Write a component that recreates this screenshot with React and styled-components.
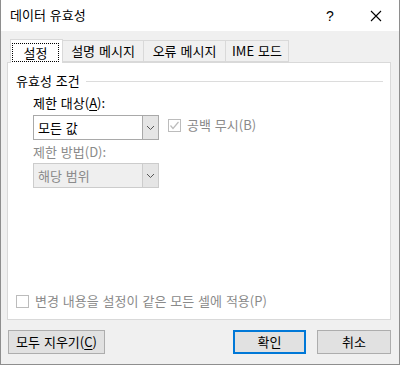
import React from "react";
import styled, { createGlobalStyle } from "styled-components";

const Global = createGlobalStyle`
  html, body { margin: 0; padding: 0; background: #ffffff; }
  * { box-sizing: border-box; }
  body { font-family: "Noto Sans CJK KR", "Noto Sans", sans-serif; font-size: 13px; color: #000; word-spacing: 1px; }
`;

const Window = styled.div`
  width: 400px;
  height: 365px;
  display: flex;
  flex-direction: column;
  border: 1px solid #8e8e8e;
  border-top: none;
  background: #f0f0f0;
  overflow: hidden;
`;

const TitleBar = styled.div`
  height: 31px;
  background: #ffffff;
  display: flex;
  align-items: center;
  padding-left: 9px;
  flex-shrink: 0;
`;

const Title = styled.div`
  flex: 1;
  line-height: 16px;
  padding-bottom: 1px;
`;

const TitleBtn = styled.div`
  width: ${(p) => p.$w}px;
  height: 31px;
  display: flex;
  align-items: center;
  justify-content: center;
  font-family: "Liberation Sans", sans-serif;
  font-size: 14px;
`;

const Body = styled.div`
  flex: 1;
  display: flex;
  flex-direction: column;
  padding: 8px 8px 0 6px;
`;

const TabStrip = styled.div`
  display: flex;
  align-items: flex-end;
  height: 23px;
  padding-left: 3px;
  position: relative;
  z-index: 1;
`;

const Tab = styled.div`
  width: ${(p) => p.$w}px;
  height: ${(p) => (p.$active ? 24 : 22)}px;
  margin-bottom: ${(p) => (p.$active ? -1 : 0)}px;
  margin-left: ${(p) => (p.$first ? 0 : -1)}px;
  background: ${(p) => (p.$active ? "#ffffff" : "#f0f0f0")};
  border: 1px solid #d9d9d9;
  border-bottom: ${(p) => (p.$active ? "none" : "1px solid #d9d9d9")};
  display: flex;
  align-items: ${(p) => (p.$active ? "flex-start" : "center")};
  justify-content: center;
  line-height: 16px;
  padding-top: ${(p) => (p.$active ? 3 : 0)}px;
  white-space: nowrap;
`;

const Focus = styled.span`
  display: flex;
  align-items: center;
  justify-content: center;
  width: 47px;
  height: 19px;
  margin-right: 2px;
  outline: 1px dotted #000;
  outline-offset: -1px;
`;

const Panel = styled.div`
  width: 384px;
  height: 258px;
  background: #ffffff;
  border: 1px solid #d9d9d9;
  display: flex;
  flex-direction: column;
  padding: 10px 7px 10px 8px;
`;

const GroupHead = styled.div`
  display: flex;
  align-items: center;
  line-height: 16px;
  gap: 6px;
  &::after {
    content: "";
    flex: 1;
    height: 1px;
    background: #dcdcdc;
    margin-top: 1px;
  }
`;

const Label = styled.div`
  line-height: 16px;
  margin-left: 17px;
  margin-top: ${(p) => p.$mt}px;
  color: ${(p) => (p.$disabled ? "#8a8a8a" : "#000")};
`;

const U = styled.span`
  text-decoration: underline;
  text-underline-offset: 2px;
`;

const Row = styled.div`
  display: flex;
  align-items: flex-start;
  margin-left: 17px;
  margin-top: ${(p) => p.$mt}px;
`;

const Combo = styled.div`
  width: 126px;
  height: 25px;
  display: flex;
  border: 1px solid ${(p) => (p.$disabled ? "#cccccc" : "#a9a9a9")};
  background: ${(p) => (p.$disabled ? "#efefef" : "#ffffff")};
  color: ${(p) => (p.$disabled ? "#8a8a8a" : "#000")};
`;

const ComboText = styled.div`
  flex: 1;
  display: flex;
  align-items: center;
  padding-left: 4px;
  line-height: 16px;
`;

const ComboBtn = styled.div`
  width: 17px;
  margin: -1px -1px -1px 0;
  border: 1px solid ${(p) => (p.$disabled ? "#cccccc" : "#a9a9a9")};
  background: #e5e5e5;
  display: flex;
  align-items: center;
  justify-content: center;
`;

const CheckRow = styled.div`
  display: flex;
  align-items: center;
  gap: 6px;
  color: #8a8a8a;
  line-height: 16px;
  margin: ${(p) => p.$m};
  white-space: nowrap;
`;

const Box = styled.div`
  width: 13px;
  height: 13px;
  border: 1px solid #bcbcbc;
  background: #ffffff;
  display: flex;
  align-items: center;
  justify-content: center;
`;

const Spacer = styled.div`
  flex: 1;
`;

const Footer = styled.div`
  display: flex;
  align-items: center;
  padding-top: 10px;
  padding-left: 1px;
`;

const Button = styled.div`
  width: ${(p) => p.$w}px;
  height: 24px;
  background: #e1e1e1;
  border: ${(p) => (p.$default ? "2px solid #0078d7" : "1px solid #adadad")};
  display: flex;
  align-items: center;
  justify-content: center;
  line-height: 16px;
  margin-left: ${(p) => p.$ml || 0}px;
  white-space: nowrap;
`;

const Chevron = () => (
  <svg width="9" height="6" viewBox="0 0 9 6">
    <polyline points="1,1 4.5,4.5 8,1" fill="none" stroke="#555" strokeWidth="1" />
  </svg>
);

const Check = () => (
  <svg width="11" height="11" viewBox="0 0 11 11">
    <polyline points="1.5,5.5 4,8.5 9.5,2" fill="none" stroke="#bcbcbc" strokeWidth="1.2" />
  </svg>
);

export default function App() {
  return (
    <>
      <Global />
      <Window>
        <TitleBar>
          <Title>데이터 유효성</Title>
          <TitleBtn $w={46}>?</TitleBtn>
          <TitleBtn $w={46}>
            <svg width="12" height="12" viewBox="0 0 12 12">
              <path d="M1 1 L11 11 M11 1 L1 11" stroke="#000" strokeWidth="1.1" />
            </svg>
          </TitleBtn>
        </TitleBar>
        <Body>
          <TabStrip>
            <Tab $w={53} $active $first>
              <Focus>설정</Focus>
            </Tab>
            <Tab $w={82}>설명 메시지</Tab>
            <Tab $w={83}>오류 메시지</Tab>
            <Tab $w={64}>IME 모드</Tab>
          </TabStrip>
          <Panel>
            <GroupHead>유효성 조건</GroupHead>
            <Label $mt={6}>
              제한 대상(<U>A</U>):
            </Label>
            <Row $mt={4}>
              <Combo>
                <ComboText>모든 값</ComboText>
                <ComboBtn>
                  <Chevron />
                </ComboBtn>
              </Combo>
              <CheckRow $m="2px 0 0 9px">
                <Box>
                  <Check />
                </Box>
                공백 무시(B)
              </CheckRow>
            </Row>
            <Label $mt={4} $disabled>
              제한 방법(D):
            </Label>
            <Row $mt={3}>
              <Combo $disabled>
                <ComboText>해당 범위</ComboText>
                <ComboBtn $disabled>
                  <Chevron />
                </ComboBtn>
              </Combo>
            </Row>
            <Spacer />
            <CheckRow $m="0 0 0 0">
              <Box />
              변경 내용을 설정이 같은 모든 셀에 적용(P)
            </CheckRow>
          </Panel>
          <Footer>
            <Button $w={97}>
              모두 지우기(<U>C</U>)
            </Button>
            <Spacer />
            <Button $w={73} $default>
              확인
            </Button>
            <Button $w={74} $ml={11}>
              취소
            </Button>
          </Footer>
        </Body>
      </Window>
    </>
  );
}
